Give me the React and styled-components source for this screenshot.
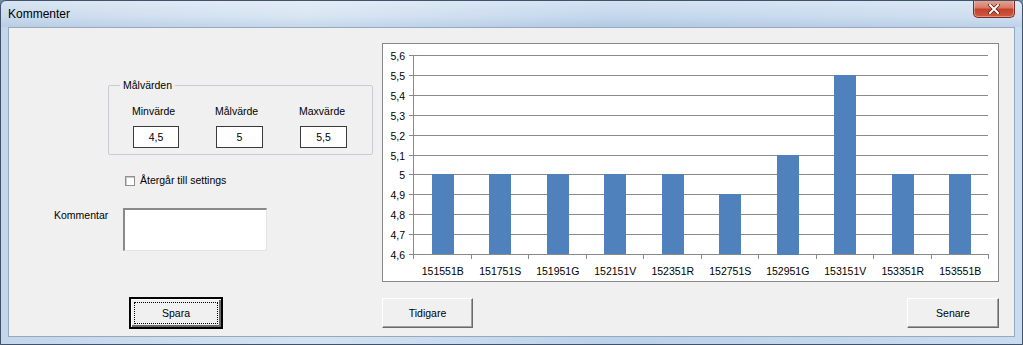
import React from 'react';
import styled, { createGlobalStyle } from 'styled-components';

const GlobalStyle = createGlobalStyle`
    html, body {
        margin: 0;
        padding: 0;
        background: #6f8aa6;
    }
    body {
        font-family: "Liberation Sans", Arial, sans-serif;
    }
`;

const Window = styled.div`
    width: 1023px;
    height: 345px;
    box-sizing: border-box;
    display: flex;
    flex-direction: column;
    border: 1px solid #41536a;
    border-radius: 6px 6px 0 0;
    background: linear-gradient(90deg, #c3d6ea 0%, #d4e3f3 30%, #bcd2ea 60%, #cadcef 100%);
    overflow: hidden;
`;

const TitleBar = styled.div`
    height: 26px;
    display: flex;
    justify-content: space-between;
    align-items: flex-start;
    padding-left: 7px;
    background: linear-gradient(180deg, rgba(255,255,255,0.35) 0%, rgba(255,255,255,0.1) 60%, rgba(120,150,190,0.15) 100%);
`;

const Title = styled.span`
    margin-top: 6px;
    font-size: 12px;
    color: #000;
`;

const CloseButton = styled.div`
    width: 42px;
    height: 18px;
    margin-right: 7px;
    margin-top: -1px;
    box-sizing: border-box;
    display: flex;
    align-items: center;
    justify-content: center;
    border: 1px solid #7a2c22;
    border-top: none;
    border-radius: 0 0 5px 5px;
    background: linear-gradient(180deg, #e8a899 0%, #d97a66 45%, #c4412b 55%, #d0593f 100%);
    box-shadow: inset 0 0 0 1px rgba(255,255,255,0.35);
`;

const Client = styled.div`
    flex: 1;
    margin: 0 7px 7px 7px;
    border: 1px solid #97a9bd;
    background: #f0f0f0;
    display: grid;
    grid-template-columns: 373px 617px;
    grid-template-rows: 239px 30px;
    row-gap: 17px;
    padding-top: 14px;
    box-sizing: border-box;
    font-size: 10.5px;
    color: #000;
`;

const LeftPanel = styled.div`
    display: flex;
    flex-direction: column;
`;

const GroupBox = styled.fieldset`
    margin: 37px 0 0 99px;
    width: 265px;
    height: 76px;
    box-sizing: border-box;
    border: 1px solid #c9cdd1;
    border-radius: 2px;
    padding: 0 0 0 24px;
`;

const Legend = styled.legend`
    padding: 0 3px;
    margin-left: -13px;
    font-size: 10.5px;
    line-height: 12px;
`;

const FieldRow = styled.div`
    display: flex;
    gap: 37px;
    margin-top: 14px;
`;

const Field = styled.div`
    display: flex;
    flex-direction: column;
    align-items: flex-start;
    gap: 8px;
`;

const FieldLabel = styled.span`
    line-height: 13px;
    margin-left: -1px;
`;

const ValueBox = styled.div`
    width: ${p => p.$w || 46}px;
    height: 22px;
    box-sizing: border-box;
    border: 1px solid #3a3a3a;
    background: #fff;
    display: flex;
    align-items: center;
    justify-content: center;
    font-size: 10.5px;
`;

const CheckRow = styled.label`
    display: flex;
    align-items: center;
    gap: 5px;
    margin: 19px 0 0 116px;
    line-height: 13px;
`;

const CheckBox = styled.span`
    width: 10px;
    height: 10px;
    box-sizing: border-box;
    border: 1px solid #8f8f8f;
    background: #fff;
    box-shadow: inset 1px 1px 0 #c8c8c8;
`;

const CommentRow = styled.div`
    display: flex;
    align-items: flex-start;
    margin: 21px 0 0 45px;
`;

const CommentLabel = styled.span`
    width: 69px;
    line-height: 13px;
    margin-top: 1px;
`;

const CommentBox = styled.div`
    width: 144px;
    height: 43px;
    box-sizing: border-box;
    background: #fff;
    border-top: 2px solid #8a8a8a;
    border-left: 2px solid #8a8a8a;
    border-right: 1px solid #e3e3e3;
    border-bottom: 1px solid #e3e3e3;
`;

const ChartBox = styled.div`
    width: 617px;
    height: 239px;
    box-sizing: border-box;
    border: 1px solid #888;
    background: #fff;
    margin-top: 1px;
`;

const ButtonCell = styled.div`
    display: flex;
    justify-content: ${p => p.$spread ? 'space-between' : 'flex-start'};
    padding-left: ${p => p.$indent || 0}px;
`;

const Button = styled.button`
    width: ${p => p.$w}px;
    height: 30px;
    box-sizing: border-box;
    background: #f0f0f0;
    font-family: "Liberation Sans", Arial, sans-serif;
    font-size: 10.5px;
    color: #000;
    padding: 0;
    border-top: 1px solid #fff;
    border-left: 1px solid #fff;
    border-right: 1px solid #6a6a6a;
    border-bottom: 1px solid #6a6a6a;
    box-shadow: inset -1px -1px 0 #a0a0a0;
    ${p => p.$default && `
        outline: 1px solid #000;
        outline-offset: 0;
        border: 1px solid #000;
        box-shadow: inset 1px 1px 0 #fff, inset -2px -2px 0 #6a6a6a;
    `}
`;

const FocusRing = styled.span`
    display: flex;
    align-items: center;
    justify-content: center;
    margin: 3px;
    height: 20px;
    border: 1px dotted #000;
`;

const values = [5, 5, 5, 5, 5, 4.9, 5.1, 5.5, 5, 5];
const names = ['151551B', '151751S', '151951G', '152151V', '152351R', '152751S', '152951G', '153151V', '153351R', '153551B'];

const X0 = 30;
const X1 = 605;
const Y_TOP = 11;
const Y_BOT = 210;
const yFor = v => Y_BOT - (v - 4.6) * (Y_BOT - Y_TOP);

const Chart = () => {
    const cat = (X1 - X0) / values.length;
    const ticks = [];
    for (let i = 0; i <= 10; i++) ticks.push(+(4.6 + i * 0.1).toFixed(1));
    return (
        <svg width="615" height="237" style={{ display: 'block' }}>
            {ticks.map(t => {
                const y = Math.round(yFor(t)) + 0.5;
                return (
                    <g key={t}>
                        <line x1={X0 - 4} x2={X1} y1={y} y2={y} stroke="#8a8a8a" shapeRendering="crispEdges" />
                        <text x="22" y={y + 4} textAnchor="end" fontSize="10.5" fontFamily="Liberation Sans, Arial, sans-serif" fill="#000">
                            {String(t).replace('.', ',')}
                        </text>
                    </g>
                );
            })}
            <line x1={X0 + 0.5} x2={X0 + 0.5} y1={Y_TOP} y2={Y_BOT} stroke="#8a8a8a" shapeRendering="crispEdges" />
            {values.map((v, i) => {
                const cx = X0 + cat * i + cat / 2;
                const top = yFor(v);
                return (
                    <g key={i}>
                        <rect x={Math.round(cx - 10)} y={Math.round(top)} width="22" height={Math.round(Y_BOT - top)} fill="#4f81bd" />
                        <text x={cx + 1} y="231" textAnchor="middle" fontSize="10.5" fontFamily="Liberation Sans, Arial, sans-serif" fill="#000">
                            {names[i]}
                        </text>
                    </g>
                );
            })}
            {Array.from({ length: 11 }).map((_, i) => {
                const x = Math.round(X0 + cat * i) + 0.5;
                return <line key={i} x1={x} x2={x} y1={Y_BOT} y2={Y_BOT + 5} stroke="#8a8a8a" shapeRendering="crispEdges" />;
            })}
        </svg>
    );
};

const App = () => {
    return (
        <>
            <GlobalStyle />
            <Window>
                <TitleBar>
                    <Title>Kommenter</Title>
                    <CloseButton>
                        <svg width="12" height="10" viewBox="0 0 12 10">
                            <path d="M2 1 L10 9 M10 1 L2 9" stroke="#5a1a12" strokeWidth="3.4" strokeLinecap="square" />
                            <path d="M2 1 L10 9 M10 1 L2 9" stroke="#fff" strokeWidth="2" strokeLinecap="square" />
                        </svg>
                    </CloseButton>
                </TitleBar>
                <Client>
                    <LeftPanel>
                        <GroupBox>
                            <Legend>Målvärden</Legend>
                            <FieldRow>
                                <Field>
                                    <FieldLabel>Minvärde</FieldLabel>
                                    <ValueBox $w={46}>4,5</ValueBox>
                                </Field>
                                <Field>
                                    <FieldLabel>Målvärde</FieldLabel>
                                    <ValueBox $w={47}>5</ValueBox>
                                </Field>
                                <Field>
                                    <FieldLabel>Maxvärde</FieldLabel>
                                    <ValueBox $w={47}>5,5</ValueBox>
                                </Field>
                            </FieldRow>
                        </GroupBox>
                        <CheckRow>
                            <CheckBox />
                            Återgår till settings
                        </CheckRow>
                        <CommentRow>
                            <CommentLabel>Kommentar</CommentLabel>
                            <CommentBox />
                        </CommentRow>
                    </LeftPanel>
                    <ChartBox>
                        <Chart />
                    </ChartBox>
                    <ButtonCell $indent={121}>
                        <Button $w={92} $default>
                            <FocusRing>Spara</FocusRing>
                        </Button>
                    </ButtonCell>
                    <ButtonCell $spread>
                        <Button $w={91}>Tidigare</Button>
                        <Button $w={92}>Senare</Button>
                    </ButtonCell>
                </Client>
            </Window>
        </>
    );
};

export default App;
